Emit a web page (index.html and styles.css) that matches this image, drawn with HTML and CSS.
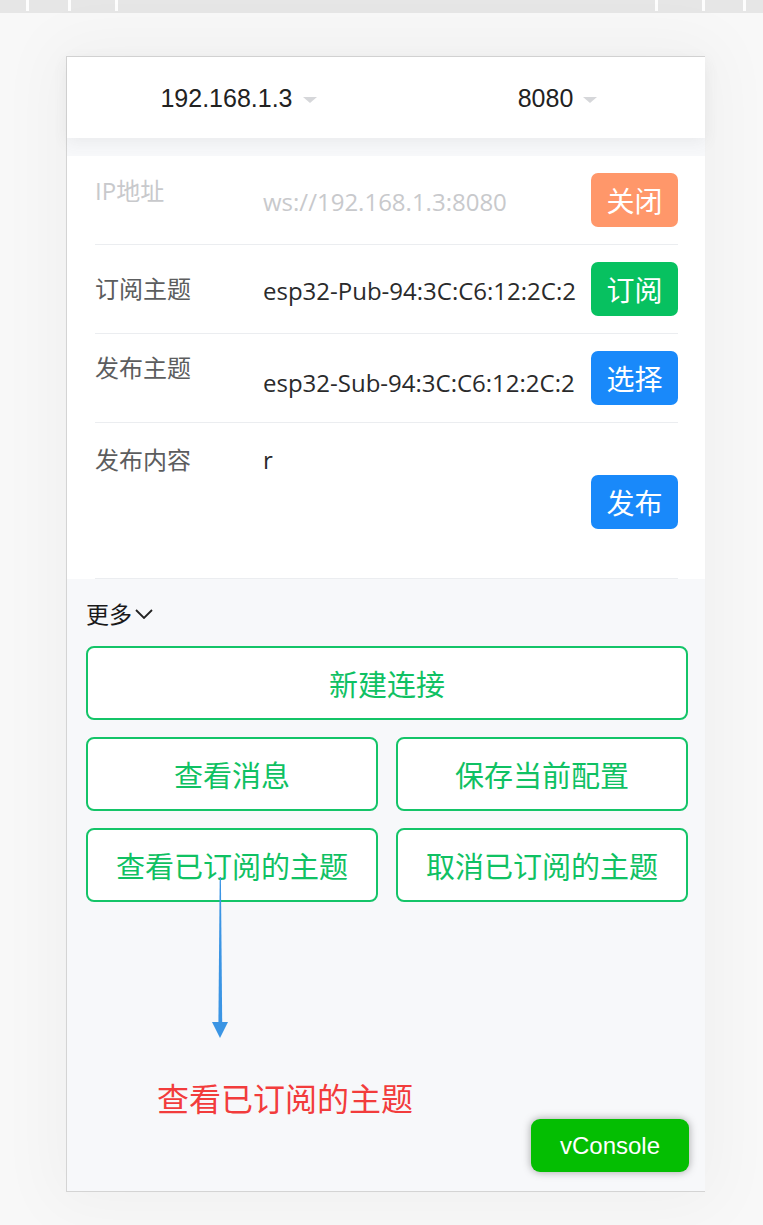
FILE: index.html
```html
<!DOCTYPE html>
<html lang="zh-CN">
<head>
<meta charset="utf-8">
<title>MQTT</title>
<link rel="stylesheet" href="styles.css">
</head>
<body>
<div class="topbar">
  <i class="tick t1"></i><i class="tick t2"></i><i class="tick t3"></i>
  <i class="tick t4"></i><i class="tick t5"></i><i class="tick t6"></i>
</div>
<div class="frame">
  <header class="hdr">
    <div class="hdr-item"><span class="sel">192.168.1.3</span></div>
    <div class="hdr-item"><span class="sel">8080</span></div>
  </header>

  <section class="cells">
    <div class="cell row-ip">
      <div class="cell-in">
        <div class="lbl dis">IP地址</div>
        <div class="val dis">ws://192.168.1.3:8080</div>
        <button class="btn orange">关闭</button>
      </div>
    </div>
    <div class="cell row-sub">
      <div class="cell-in">
        <div class="lbl">订阅主题</div>
        <div class="val">esp32-Pub-94:3C:C6:12:2C:2</div>
        <button class="btn green">订阅</button>
      </div>
    </div>
    <div class="cell row-pub">
      <div class="cell-in">
        <div class="lbl">发布主题</div>
        <div class="val">esp32-Sub-94:3C:C6:12:2C:2</div>
        <button class="btn blue">选择</button>
      </div>
    </div>
    <div class="cell row-msg">
      <div class="cell-in">
        <div class="lbl">发布内容</div>
        <div class="val">r</div>
        <button class="btn blue">发布</button>
      </div>
    </div>
  </section>

  <section class="more">
    <div class="more-t">更多<svg class="chev" width="18" height="10" viewBox="0 0 18 10"><polyline points="1,1 9,9 17,1" fill="none" stroke="#222" stroke-width="1.8"/></svg></div>
    <div class="grid">
      <button class="ob wide">新建连接</button>
      <button class="ob">查看消息</button>
      <button class="ob">保存当前配置</button>
      <button class="ob">查看已订阅的主题</button>
      <button class="ob">取消已订阅的主题</button>
    </div>
    <p class="note">查看已订阅的主题</p>
  </section>

  <svg class="arrow" width="16" height="162" viewBox="0 0 16 162">
    <polygon points="7.7,0 8.9,0 10.2,146 6.4,146" fill="#3b95e4"/>
    <polygon points="0,145 16,145 8,161" fill="#3b95e4"/>
  </svg>
</div>
<button class="vconsole">vConsole</button>
</body>
</html>
```
FILE: styles.css
```css
* { box-sizing: border-box; }
html, body { margin: 0; padding: 0; }
body {
  width: 763px;
  height: 1225px;
  overflow: hidden;
  background: #f8f8f8;
  font-family: "Open Sans", "Noto Sans CJK SC", sans-serif;
  position: relative;
}
.topbar {
  height: 13px;
  background: #e6e6e6;
  position: relative;
}
.tick {
  position: absolute;
  top: 0;
  width: 3px;
  height: 11px;
  background: #fdfdfd;
}
.t1 { left: 26px; }
.t2 { left: 68px; }
.t3 { left: 115px; }
.t4 { left: 655px; }
.t5 { left: 702px; }
.t6 { left: 743px; }

.frame {
  position: relative;
  margin: 43px 0 0 66px;
  width: 639px;
  height: 1136px;
  border: 1px solid #d4d4d4;
  border-right: none;
  background: #f7f8fa;
  box-shadow: 0 0 60px 14px rgba(0, 0, 0, 0.035);
}

.hdr {
  display: flex;
  height: 81px;
  background: #fff;
  box-shadow: 0 4px 14px rgba(100, 101, 102, 0.09);
  position: relative;
  z-index: 1;
}
.hdr-item {
  flex: 1;
  display: flex;
  align-items: center;
  justify-content: center;
}
.sel {
  position: relative;
  font-family: "Liberation Sans", Arial, sans-serif;
  font-size: 25px;
  color: #222;
  line-height: 30px;
}
.sel::after {
  content: "";
  position: absolute;
  left: calc(100% + 10px);
  top: 14px;
  border-left: 7px solid transparent;
  border-right: 7px solid transparent;
  border-top: 6px solid #d6d7da;
}

.cells {
  margin-top: 18px;
  background: #fff;
}
.cell {
  padding: 0 27px 0 28px;
}
.cell-in {
  display: flex;
  align-items: center;
  height: 89px;
  border-bottom: 1px solid #ebedf0;
}
.lbl {
  width: 168px;
  flex-shrink: 0;
  font-size: 24px;
  line-height: 24px;
  color: #5c5d5e;
}
.val {
  flex: 1;
  min-width: 0;
  margin-right: 14px;
  white-space: nowrap;
  font-size: 24px;
  line-height: 28px;
  color: #2a2a2b;
  padding-top: 4px;
}
.dis { color: #c8c9cc; }
.btn {
  flex-shrink: 0;
  width: 87px;
  height: 54px;
  border: none;
  border-radius: 7px;
  color: #fff;
  font-family: "Noto Sans CJK SC", sans-serif;
  font-size: 28px;
  line-height: 54px;
  padding: 0;
}
.orange { background: #ff976a; }
.green { background: #07c160; }
.blue { background: #1989fa; }

.row-ip .lbl { align-self: flex-start; margin-top: 23px; }
.row-pub .lbl { align-self: flex-start; margin-top: 22px; }
.row-pub .val { padding-top: 10px; }
.row-msg .cell-in { height: 156px; align-items: flex-start; }
.row-msg .lbl { margin-top: 25px; }
.row-msg .val { margin-top: 25px; padding-top: 0; line-height: 24px; }
.row-msg .btn { margin-top: 52px; }

.more {
  padding: 22px 17px 0 19px;
}
.more-t {
  display: flex;
  align-items: center;
  font-family: "Noto Sans CJK SC", sans-serif;
  font-size: 23px;
  line-height: 24px;
  color: #1a1a1a;
}
.chev { margin-left: 3px; margin-top: 2px; }
.grid {
  margin-top: 21px;
  display: grid;
  grid-template-columns: 1fr 1fr;
  grid-auto-rows: 74px;
  gap: 17px 18px;
}
.ob {
  background: #fff;
  border: 2px solid #14c468;
  border-radius: 8px;
  color: #0fc163;
  font-family: "Noto Sans CJK SC", sans-serif;
  font-size: 29px;
  padding: 0;
}
.wide { grid-column: 1 / 3; }
.note {
  margin: 179px 0 0 71px;
  font-family: "Noto Sans CJK SC", sans-serif;
  font-size: 32px;
  line-height: 32px;
  color: #f23c3c;
}

.arrow {
  position: absolute;
  left: 145px;
  top: 820px;
}

.vconsole {
  position: absolute;
  left: 531px;
  top: 1119px;
  width: 158px;
  height: 53px;
  border: none;
  border-radius: 9px;
  background: #04be02;
  color: #fff;
  font-family: "Liberation Sans", Arial, sans-serif;
  font-size: 24px;
  box-shadow: 0 0 9px rgba(0, 0, 0, 0.35);
  padding: 0;
}
```
